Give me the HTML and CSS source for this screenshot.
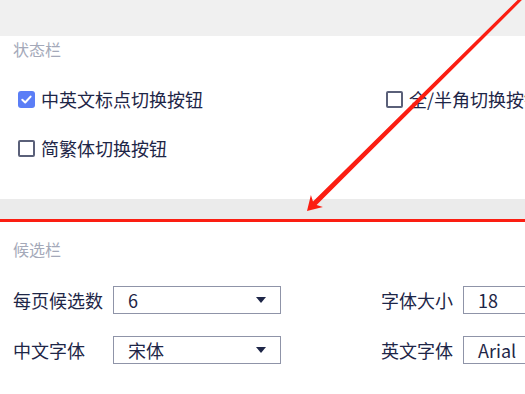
FILE: index.html
```html
<!DOCTYPE html>
<html lang="zh-CN">
<head>
<meta charset="utf-8">
<link rel="stylesheet" href="styles.css">
</head>
<body>
<div class="page">
  <div class="band band-top"></div>
  <section class="section status">
    <div class="section-title">状态栏</div>
    <div class="checks">
      <label class="check"><span class="box box-on"><svg viewBox="0 0 17 17" width="17" height="17"><path d="M4.3 8.8 L7.2 11.5 L12.6 5.6" fill="none" stroke="#fff" stroke-width="2" stroke-linecap="round" stroke-linejoin="round"/></svg></span><span class="check-text">中英文标点切换按钮</span></label>
      <label class="check"><span class="box"></span><span class="check-text">全/半角切换按钮</span></label>
      <label class="check"><span class="box"></span><span class="check-text">简繁体切换按钮</span></label>
    </div>
  </section>
  <div class="band band-mid"></div>
  <section class="section candidates">
    <div class="section-title">候选栏</div>
    <div class="form">
      <span class="label">每页候选数</span>
      <div class="select"><span>6</span><span class="caret"></span></div>
      <span></span>
      <span class="label">字体大小</span>
      <div class="input">18</div>

      <span class="label">中文字体</span>
      <div class="select"><span>宋体</span><span class="caret"></span></div>
      <span></span>
      <span class="label">英文字体</span>
      <div class="input">Arial</div>
    </div>
  </section>
  <svg class="arrow" viewBox="0 0 525 394" width="525" height="394">
    <polygon points="307,211 322.9,207.1 316.6,205.1 525.9,-4.0 523.7,-6.0 313.0,201.5 310.9,195.1" fill="#fb1e12"/>
  </svg>
</div>
</body>
</html>
```

FILE: styles.css
```css
html, body {
  margin: 0;
  padding: 0;
  background: #ffffff;
}
body {
  font-family: "Noto Sans CJK SC", "Noto Sans", sans-serif;
  color: #1e2647;
  overflow: hidden;
  width: 525px;
  height: 394px;
}
.page {
  position: relative;
  width: 525px;
  height: 394px;
  overflow: hidden;
}
.band {
  background: #f0f0f0;
}
.band-top {
  height: 36px;
}
.band-mid {
  height: 20px;
  background: #ebebeb;
  border-bottom: 3px solid #fb1e12;
}
.section {
  padding-left: 13px;
  white-space: nowrap;
}
.section-title {
  font-size: 16px;
  line-height: 22px;
  color: #a4a9b9;
}
.status {
  padding-top: 2px;
  padding-bottom: 37px;
  height: 124px;
}
.checks {
  margin-top: 25px;
  display: grid;
  grid-template-columns: 368px 300px;
  row-gap: 21px;
}
.check {
  display: flex;
  align-items: center;
  height: 28px;
  padding-left: 5px;
  gap: 6px;
  font-size: 18px;
}
.box {
  width: 17px;
  height: 17px;
  box-sizing: border-box;
  border: 2px solid #5a6079;
  border-radius: 2px;
  display: flex;
  flex: none;
}
.box-on {
  border: none;
  background: #5b7ef6;
  border-radius: 3px;
}
.check-text {
  line-height: 28px;
}
.candidates {
  padding-top: 16px;
}
.form {
  margin-top: 26px;
  display: grid;
  grid-template-columns: 100px 168px 100px 82px 140px;
  grid-auto-rows: 28px;
  row-gap: 22px;
  align-items: center;
  font-size: 18px;
}
.label {
  line-height: 28px;
}
.select, .input {
  box-sizing: border-box;
  height: 28px;
  border: 1px solid #8f94a8;
  padding-left: 14px;
  display: flex;
  align-items: center;
  line-height: 26px;
}
.select {
  justify-content: space-between;
  padding-right: 14px;
}
.caret {
  width: 0;
  height: 0;
  border-left: 5px solid transparent;
  border-right: 5px solid transparent;
  border-top: 6px solid #1e2647;
}
.arrow {
  position: absolute;
  left: 0;
  top: 0;
  pointer-events: none;
}
```
